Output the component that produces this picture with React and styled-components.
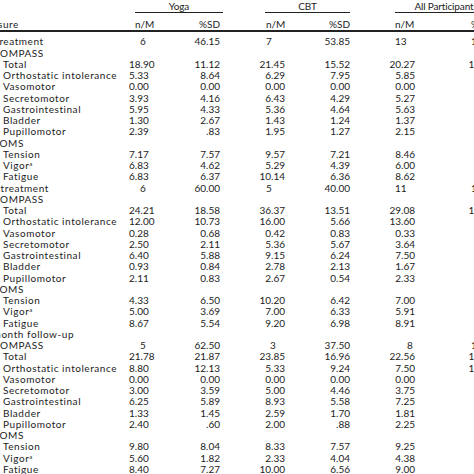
import React from 'react';
import styled, { createGlobalStyle } from 'styled-components';

const COLS = '147px 19px 72px 65px 65px 65px 79px';

const GlobalStyle = createGlobalStyle`
  html, body {
    margin: 0;
    padding: 0;
    background: #fff;
  }
`;

const Page = styled.div`
  width: 474px;
  height: 474px;
  overflow: hidden;
  font-family: Lato, 'Liberation Sans', sans-serif;
  font-size: 10px;
  color: #1c1c1c;
`;

const Table = styled.div`
  margin-left: -18px;
  width: 515px;
`;

const GroupRow = styled.div`
  display: grid;
  grid-template-columns: ${COLS};
  height: 13px;
`;

const GroupHead = styled.div`
  grid-column: ${p => p.$col} / span 2;
  margin: 0 ${p => p.$mr}px 0 ${p => p.$ml}px;
  border-bottom: 1px solid #222;
  text-align: center;
  line-height: 12px;
  white-space: nowrap;
  letter-spacing: -0.15px;
`;

const SubHeadRow = styled.div`
  display: grid;
  grid-template-columns: ${COLS};
  box-sizing: border-box;
  height: 19px;
  line-height: 11px;
  align-items: end;
  border-bottom: 2px solid #222;
  margin-bottom: 4.4px;
`;

const Row = styled.div`
  display: grid;
  grid-template-columns: ${COLS};
  height: 11.26px;
  line-height: 11.26px;
  white-space: nowrap;
`;

const Label = styled.div`
  padding-left: ${p => [0, 11, 21][p.$level]}px;
  margin-left: ${p => p.$shift || 0}px;
  text-align: left;
  letter-spacing: 0.55px;
`;

const Cell = styled.div`
  text-align: ${p => (p.$indent != null ? 'left' : 'right')};
  padding-left: ${p => p.$indent || 0}px;
`;

const Sup = styled.sup`
  font-size: 6px;
  line-height: 0;
  vertical-align: 3px;
`;

const n = (t, at) => ({ t, at });

const blocks = [
  [
    { label: 'Pretreatment', level: 0, shift: -3, v: [n('6', 11), '46.15', n('7', 46), '53.85', n('13', 45), n('100.00', 56)] },
    { label: 'COMPASS', level: 1 },
    { label: 'Total', level: 2, v: ['18.90', '11.12', '21.45', '15.52', '20.27', '13.27'] },
    { label: 'Orthostatic intolerance', level: 2, v: ['5.33', '8.64', '6.29', '7.95', '5.85', '7.86'] },
    { label: 'Vasomotor', level: 2, v: ['0.00', '0.00', '0.00', '0.00', '0.00', '0.00'] },
    { label: 'Secretomotor', level: 2, v: ['3.93', '4.16', '6.43', '4.29', '5.27', '4.32'] },
    { label: 'Gastrointestinal', level: 2, v: ['5.95', '4.33', '5.36', '4.64', '5.63', '4.34'] },
    { label: 'Bladder', level: 2, v: ['1.30', '2.67', '1.43', '1.24', '1.37', '1.95'] },
    { label: 'Pupillomotor', level: 2, v: ['2.39', '.83', '1.95', '1.27', '2.15', '1.06'] },
    { label: 'POMS', level: 1 },
    { label: 'Tension', level: 2, v: ['7.17', '7.57', '9.57', '7.21', '8.46', '7.20'] },
    { label: 'Vigor', sup: true, level: 2, v: ['6.83', '4.62', '5.29', '4.39', '6.00', '4.40'] },
    { label: 'Fatigue', level: 2, v: ['6.83', '6.37', '10.14', '6.36', '8.62', '6.37'] },
  ],
  [
    { label: 'Posttreatment', level: 0, shift: -3, v: [n('6', 11), '60.00', n('5', 46), '40.00', n('11', 45), n('100.00', 56)] },
    { label: 'COMPASS', level: 1 },
    { label: 'Total', level: 2, v: ['24.21', '18.58', '36.37', '13.51', '29.08', '16.71'] },
    { label: 'Orthostatic intolerance', level: 2, v: ['12.00', '10.73', '16.00', '5.66', '13.60', '5.03'] },
    { label: 'Vasomotor', level: 2, v: ['0.28', '0.68', '0.42', '0.83', '0.33', '0.69'] },
    { label: 'Secretomotor', level: 2, v: ['2.50', '2.11', '5.36', '5.67', '3.64', '3.94'] },
    { label: 'Gastrointestinal', level: 2, v: ['6.40', '5.88', '9.15', '6.24', '7.50', '6.03'] },
    { label: 'Bladder', level: 2, v: ['0.93', '0.84', '2.78', '2.13', '1.67', '1.64'] },
    { label: 'Pupillomotor', level: 2, v: ['2.11', '0.83', '2.67', '0.54', '2.33', '0.71'] },
    { label: 'POMS', level: 1 },
    { label: 'Tension', level: 2, v: ['4.33', '6.50', '10.20', '6.42', '7.00', '6.78'] },
    { label: 'Vigor', sup: true, level: 2, v: ['5.00', '3.69', '7.00', '6.33', '5.91', '4.89'] },
    { label: 'Fatigue', level: 2, v: ['8.67', '5.54', '9.20', '6.98', '8.91', '5.96'] },
  ],
  [
    { label: '3-month follow-up', level: 0 },
    { label: 'COMPASS', level: 1, v: [n('5', 11), '62.50', n('3', 50), '37.50', n('8', 57), n('100.00', 56)] },
    { label: 'Total', level: 2, v: ['21.78', '21.87', '23.85', '16.96', '22.56', '18.82'] },
    { label: 'Orthostatic intolerance', level: 2, v: ['8.80', '12.13', '5.33', '9.24', '7.50', '10.69'] },
    { label: 'Vasomotor', level: 2, v: ['0.00', '0.00', '0.00', '0.00', '0.00', '0.00'] },
    { label: 'Secretomotor', level: 2, v: ['3.00', '3.59', '5.00', '4.46', '3.75', '3.81'] },
    { label: 'Gastrointestinal', level: 2, v: ['6.25', '5.89', '8.93', '5.58', '7.25', '5.50'] },
    { label: 'Bladder', level: 2, v: ['1.33', '1.45', '2.59', '1.70', '1.81', '1.60'] },
    { label: 'Pupillomotor', level: 2, v: ['2.40', '.60', '2.00', '.88', '2.25', '.71'] },
    { label: 'POMS', level: 1 },
    { label: 'Tension', level: 2, v: ['9.80', '8.04', '8.33', '7.57', '9.25', '7.46'] },
    { label: 'Vigor', sup: true, level: 2, v: ['5.60', '1.82', '2.33', '4.04', '4.38', '3.02'] },
    { label: 'Fatigue', level: 2, v: ['8.40', '7.27', '10.00', '6.56', '9.00', '6.59'] },
  ],
];

const rows = blocks.flat();

export default function App() {
  return (
    <Page>
      <GlobalStyle />
      <Table>
        <GroupRow>
          <GroupHead $col={2} $ml={6} $mr={-3}>Yoga</GroupHead>
          <GroupHead $col={4} $ml={45} $mr={0}>CBT</GroupHead>
          <GroupHead $col={6} $ml={45} $mr={-3}>All Participants</GroupHead>
        </GroupRow>
        <SubHeadRow>
          <Label $level={0} $shift={-5}>Measure</Label>
          <Cell $indent={6}>n/M</Cell>
          <Cell>%SD</Cell>
          <Cell $indent={46}>n/M</Cell>
          <Cell>%SD</Cell>
          <Cell $indent={45}>n/M</Cell>
          <Cell $indent={56}>%SD</Cell>
        </SubHeadRow>
        {rows.map((r, i) => (
          <Row key={i}>
            <Label $level={r.level} $shift={r.shift}>
              {r.label}
              {r.sup && <Sup>a</Sup>}
            </Label>
            {(r.v || []).map((c, j) =>
              typeof c === 'string' ? (
                <Cell key={j}>{c}</Cell>
              ) : (
                <Cell key={j} $indent={c.at}>{c.t}</Cell>
              )
            )}
          </Row>
        ))}
      </Table>
    </Page>
  );
}
